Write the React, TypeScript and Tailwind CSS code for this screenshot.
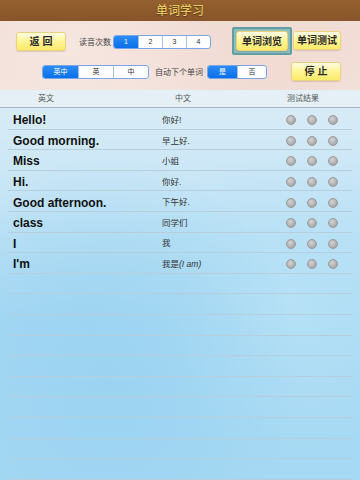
import { useState } from "react";

const words = [
  { en: "Hello!", zh: "你好!" },
  { en: "Good morning.", zh: "早上好." },
  { en: "Miss", zh: "小姐" },
  { en: "Hi.", zh: "你好." },
  { en: "Good afternoon.", zh: "下午好." },
  { en: "class", zh: "同学们" },
  { en: "I", zh: "我" },
  { en: "I'm", zh: "我是", note: "(I am)" },
];

const font = "font-['Liberation_Sans','Noto_Sans_CJK_SC',sans-serif]";

function YellowButton({ label, className }: { label: string; className: string }) {
  return (
    <button
      type="button"
      className={`${className} flex items-center justify-center rounded-[3px] border border-[#ecd27a] bg-[linear-gradient(#fffde6,#fff59a_45%,#fbea6a)] text-[10px] font-bold text-[#2a2a2a] shadow-[0_1px_1px_rgba(0,0,0,0.12)]`}
    >
      {label}
    </button>
  );
}

function Segmented({
  items,
  active,
  onPick,
  segW,
}: {
  items: string[];
  active: number;
  onPick: (i: number) => void;
  segW: string;
}) {
  return (
    <div className="flex h-[14px] overflow-hidden rounded-[3px] border border-[#7aa6e6] bg-white">
      {items.map((it, i) => (
        <button
          key={it}
          type="button"
          onClick={() => onPick(i)}
          className={`${segW} flex items-center justify-center text-[7px] ${
            i > 0 ? "border-l border-[#a9c3e8]" : ""
          } ${i === active ? "bg-[linear-gradient(#2b8cf6,#0a6fe8)] text-white" : "text-[#333]"}`}
        >
          {it}
        </button>
      ))}
    </div>
  );
}

export default function App() {
  const [times, setTimes] = useState(0);
  const [mode, setMode] = useState(0);
  const [auto, setAuto] = useState(0);

  const lines = Array.from({ length: 18 });

  return (
    <div className={`${font} h-[480px] w-[360px] overflow-hidden bg-[#a9daf3]`}>
      {/* Title bar */}
      <div className="flex h-[21px] items-center justify-center bg-[linear-gradient(#94602f,#87552a)]">
        <span className="text-[12px] text-[#f3dc6a] [text-shadow:0_1px_1px_rgba(60,30,0,0.6)]">
          单词学习
        </span>
      </div>

      {/* Controls */}
      <div className="h-[69px] bg-[radial-gradient(circle_at_20%_40%,#f6e6e0,transparent_45%),radial-gradient(circle_at_75%_70%,#f1dbd3,transparent_50%),linear-gradient(#f1ddd6,#f3e2dc)]">
        <div className="flex items-start pt-[6px]">
          <YellowButton label="返 回" className="ml-[16px] mt-[5px] h-[19px] w-[50px]" />
          <span className="ml-[13px] mt-[10px] text-[8px] text-[#444]">读音次数</span>
          <div className="ml-[2px] mt-[8px]">
            <Segmented
              items={["1", "2", "3", "4"]}
              active={times}
              onPick={setTimes}
              segW="w-[24px]"
            />
          </div>
          <div className="ml-[21px] rounded-[2px] border-2 border-[#5f9ea2] bg-[#8fbdbb] p-[2px]">
            <YellowButton label="单词浏览" className="h-[20px] w-[52px]" />
          </div>
          <YellowButton label="单词测试" className="ml-[1px] mt-[4px] h-[19px] w-[48px]" />
        </div>
        <div className="mt-[7px] flex items-start">
          <div className="ml-[42px] mt-[3px]">
            <Segmented
              items={["英中", "英", "中"]}
              active={mode}
              onPick={setMode}
              segW="w-[35px]"
            />
          </div>
          <span className="ml-[6px] mt-[5px] text-[8px] text-[#444]">自动下个单词</span>
          <div className="ml-[4px] mt-[3px]">
            <Segmented items={["是", "否"]} active={auto} onPick={setAuto} segW="w-[29px]" />
          </div>
          <YellowButton label="停 止" className="ml-[24px] h-[19px] w-[50px]" />
        </div>
      </div>

      {/* Table */}
      <div className="relative h-[390px] bg-[radial-gradient(ellipse_at_30%_75%,#9bd3f1,transparent_55%),radial-gradient(ellipse_at_80%_55%,#b6e1f6,transparent_50%),linear-gradient(#dcedf7,#c4e4f6_30%,#a4d8f3_60%,#a6d9f3)]">
        <div className="flex h-[18px] items-center border-b border-[#9fb3c2] bg-[#e4f0f6] text-[8px] text-[#555]">
          <span className="w-[92px] text-center">英文</span>
          <span className="ml-[91px] w-[0px] whitespace-nowrap text-center">
            <span className="-ml-[8px]">中文</span>
          </span>
          <span className="ml-[104px]">测试结果</span>
        </div>

        {/* ruled lines */}
        <div className="absolute left-0 top-[19px] w-full">
          {lines.map((_, i) => (
            <div key={i} className="ml-[8px] mr-[8px] h-[20.6px] border-b border-[#b7cfdc]" />
          ))}
        </div>

        <div className="relative pt-[2px]">
          {words.map((w) => (
            <div key={w.en} className="flex h-[20.6px] items-center">
              <span className="ml-[13px] w-[149px] text-[12px] font-bold text-[#111]">{w.en}</span>
              <span className="w-[124px] text-[8.5px] text-[#333]">
                {w.zh}
                {w.note && <i>{w.note}</i>}
              </span>
              <div className="flex gap-[11px]">
                {[0, 1, 2].map((c) => (
                  <span
                    key={c}
                    className="h-[10px] w-[10px] rounded-full border border-[#9a9a9a] bg-[radial-gradient(circle_at_40%_35%,#d4d4d4,#a9a9a9_70%)]"
                  />
                ))}
              </div>
            </div>
          ))}
        </div>
      </div>
    </div>
  );
}
